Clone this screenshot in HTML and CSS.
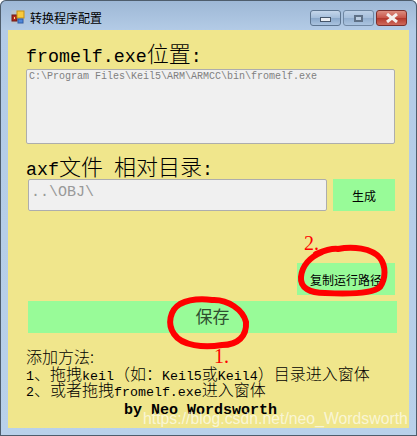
FILE: index.html
```html
<!DOCTYPE html>
<html>
<head>
    <title>转换程序配置</title>
    <meta charset="UTF-8">
    <link rel="stylesheet" href="styles.css">
</head>
<body>

    <div class="window">
        <!-- Title bar -->
        <div class="titlebar">
            <svg class="app-icon" width="14" height="14" viewBox="0 0 14 14">
                <rect x="0.5" y="0.5" width="13" height="13" fill="#b9c3cf"/>
                <rect x="1" y="5" width="5" height="6" fill="#b3261e" stroke="#6d1a14"/>
                <rect x="3" y="7" width="1" height="2" fill="#f0e68c"/>
                <rect x="6" y="1" width="7" height="7" fill="#f7c93e" stroke="#c58f12"/>
                <rect x="7" y="9" width="5" height="4" fill="#4f86d8" stroke="#2d5ca8"/>
            </svg>
            <span class="title">转换程序配置</span>
            <div class="controls">
                <div class="ctl"><span class="min-glyph"></span></div>
                <div class="ctl ctl-max"><span class="max-glyph"></span></div>
                <div class="ctl ctl-close">
                    <svg width="14" height="10" viewBox="0 0 14 10">
                        <path d="M2 1 L12 9 M12 1 L2 9" stroke="#f4f0ee" stroke-width="3"/>
                    </svg>
                </div>
            </div>
        </div>

        <!-- Client area -->
        <div class="client">
            <div class="heading">fromelf.exe<span class="cn">位置</span>:</div>
            <textarea class="path-box" readonly>C:\Program Files\Keil5\ARM\ARMCC\bin\fromelf.exe</textarea>

            <div class="heading heading-axf">axf<span class="cn">文件</span> <span class="cn">相对目录</span>:</div>
            <div class="axf-row">
                <input class="axf-input" type="text" value="..\OBJ\" readonly>
                <button class="green btn-gen" type="button">生成</button>
            </div>

            <button class="green btn-copy" type="button">复制运行路径</button>
            <button class="green btn-save" type="button">保存</button>

            <div class="help">
                <div class="help-line"><span class="cn">添加方法:</span></div>
                <div class="help-line">1<span class="cn">、拖拽</span>keil<span class="cn">（如：</span>Keil5<span class="cn">或</span>Keil4<span class="cn">）目录进入窗体</span></div>
                <div class="help-line">2<span class="cn">、或者拖拽</span>fromelf.exe<span class="cn">进入窗体</span></div>
            </div>
            <div class="byline">by Neo Wordsworth</div>
        </div>

        <!-- Red marks drawn on top of the screenshot -->
        <svg class="marks" width="417" height="436" viewBox="0 0 417 436">
            <path d="M316 254 C326 250 332 248 338 249 C352 246 372 248 380 258 C386 266 386 278 380 287 C372 294 345 294 325 293 C310 293 300 288 301 277 C302 266 310 257 322 252" fill="none" stroke="#ff0000" stroke-width="6" stroke-linecap="round"/>
            <path d="M212 300 C228 299 243 310 246 322 C247 336 238 345 222 345 C204 348 182 346 174 334 C167 324 170 310 180 304 C192 298 204 299 212 300" fill="none" stroke="#ff0000" stroke-width="6" stroke-linecap="round"/>
        </svg>
        <span class="mark-num mark-2">2.</span>
        <span class="mark-num mark-1">1.</span>
        <span class="watermark">https://blog.csdn.net/neo_Wordsworth</span>
    </div>

</body>
</html>
```

FILE: styles.css
```css
body {
    margin: 0;
    padding: 0;
    background-color: #ffffff;
}

.window {
    position: relative;
    width: 417px;
    height: 436px;
    box-sizing: border-box;
    padding: 0 8px 8px 8px;
    overflow: hidden;
    border-radius: 6px 6px 0 0;
    background: linear-gradient(to bottom, #9db7d5 0, #b3cbe6 30px, #b9d1ea 100%);
    box-shadow: inset 0 0 0 1px #4e5d6c;
}

/* Title bar */
.titlebar {
    height: 30px;
    display: flex;
    align-items: center;
    padding-top: 4px;
    box-sizing: border-box;
}

.app-icon {
    margin-left: 3px;
    margin-right: 5px;
}

.title {
    font-family: "Noto Sans CJK SC", sans-serif;
    font-size: 12px;
    color: #000;
}

.controls {
    margin-left: auto;
    margin-right: 2px;
    margin-top: 2px;
    display: flex;
    gap: 2px;
}

.ctl {
    width: 31px;
    height: 16px;
    border: 1px solid #5d7590;
    box-sizing: border-box;
    border-radius: 3px;
    background: linear-gradient(to bottom, #c4d6ea, #a5bedb 48%, #8aa8ca 52%, #aac3df);
    display: flex;
    align-items: center;
    justify-content: center;
}

.ctl-max {
    opacity: 0.75;
}

.ctl-close {
    border-color: #7d2f2b;
    background: linear-gradient(to bottom, #dc8d80, #c9564a 48%, #b3382c 52%, #cf6a5c);
}

.min-glyph {
    width: 9px;
    height: 3px;
    margin-top: 3px;
    background-color: #e9edf2;
    border: 1px solid #46566a;
}

.max-glyph {
    width: 5px;
    height: 3px;
    background-color: #c2d2e4;
    border: 2px solid #46566a;
}

/* Client area */
.client {
    height: 398px;
    box-sizing: border-box;
    padding: 5px 14px 0 18px;
    background-color: #f0e68c;
    font-family: "Liberation Mono", monospace;
    color: #000;
}

.cn {
    font-family: "Noto Sans CJK SC", sans-serif;
    font-weight: 300;
}

.heading {
    font-size: 18.3px;
    height: 34px;
    line-height: 34px;
}

.heading .cn {
    font-size: 22px;
}

.path-box {
    display: block;
    width: 369px;
    height: 75px;
    box-sizing: border-box;
    margin: 0;
    padding: 1px 2px;
    border: 1px solid #adadad;
    border-radius: 2px;
    outline: none;
    resize: none;
    background-color: #f0f0f0;
    color: #808080;
    font-family: "Liberation Mono", monospace;
    font-size: 10px;
}

.heading-axf {
    margin-top: 8px;
    height: 27px;
    line-height: 27px;
}

.axf-row {
    display: flex;
    margin-left: 2px;
    gap: 6px;
}

.axf-input {
    width: 299px;
    height: 32px;
    box-sizing: border-box;
    margin: 0;
    padding: 0 2px 6px 2px;
    border: 1px solid #adadad;
    border-radius: 2px;
    outline: none;
    background-color: #f0f0f0;
    color: #999;
    font-family: "Liberation Mono", monospace;
    font-size: 15px;
}

.green {
    display: block;
    border: none;
    padding: 0;
    height: 32px;
    background-color: #98fb98;
    color: #000;
    font-family: "Noto Sans CJK SC", sans-serif;
}

.btn-gen {
    width: 62px;
    font-size: 12px;
}

.btn-copy {
    width: 98px;
    margin-top: 52px;
    margin-left: 271px;
    font-size: 12px;
}

.btn-save {
    width: 369px;
    margin-top: 6px;
    margin-left: 2px;
    padding-bottom: 4px;
    font-size: 17px;
    color: #2f4f2f;
}

.help {
    margin-top: 15px;
    font-size: 13.3px;
}

.help-line {
    height: 16.5px;
    line-height: 16.5px;
    white-space: nowrap;
}

.help .cn {
    font-size: 16px;
}

.byline {
    margin-top: 4px;
    text-align: center;
    font-size: 15px;
    font-weight: bold;
    line-height: 18px;
    padding-right: 20px;
}

/* Overlays */
.marks {
    position: absolute;
    top: 0;
    left: 0;
    pointer-events: none;
}

.mark-num {
    position: absolute;
    font-family: "Liberation Serif", serif;
    font-size: 20px;
    line-height: 20px;
    color: #ff0000;
}

.mark-2 {
    left: 304px;
    top: 233px;
}

.mark-1 {
    left: 214px;
    top: 346px;
}

.watermark {
    position: absolute;
    left: 143px;
    top: 409px;
    font-family: "Liberation Sans", sans-serif;
    font-size: 15.8px;
    line-height: 20px;
    white-space: nowrap;
    color: rgba(255, 255, 255, 0.65);
}
```
